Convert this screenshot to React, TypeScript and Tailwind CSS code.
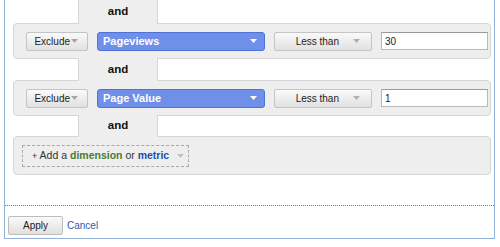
import React from "react";

const font = { fontFamily: '"Liberation Sans", Arial, sans-serif' };

function Caret({ color }: { color: string }) {
  return (
    <svg width="7" height="4" viewBox="0 0 7 4" className="shrink-0">
      <path d="M0 0 H7 L3.5 4 Z" fill={color} />
    </svg>
  );
}

function Connector({ h }: { h: string }) {
  return (
    <div className={`flex ml-[8px] ${h}`}>
      <div className="relative z-10 -my-px ml-[65px] flex w-[80px] items-center justify-center border-x border-[#d6d6d6] bg-[#eeeeee] text-[11.5px] font-bold text-[#111]">
        and
      </div>
    </div>
  );
}

function ConditionRow({ metric, value }: { metric: string; value: string }) {
  return (
    <div className="ml-[8px] flex h-[36px] w-[478px] items-center gap-[9px] rounded-[4px] border border-[#d6d6d6] bg-[#eeeeee] pl-[12px]">
      <div className="flex h-[19px] w-[62px] items-center justify-end gap-[1px] rounded-[2px] border border-[#c4c4c4] bg-gradient-to-b from-[#fafafa] to-[#e1e1e1] pr-[9px] text-[10px] text-[#222]">
        <span>Exclude</span>
        <Caret color="#a8a8a8" />
      </div>
      <div className="flex h-[19px] w-[168px] items-center justify-between rounded-[3px] border border-[#4f72d6] bg-[#6f8fe8] pl-[5px] pr-[7px] text-[11px] font-bold text-white">
        <span>{metric}</span>
        <Caret color="#ffffff" />
      </div>
      <div className="flex h-[19px] w-[98px] items-center justify-end gap-[14px] rounded-[2px] border border-[#c4c4c4] bg-gradient-to-b from-[#fafafa] to-[#e1e1e1] pr-[11px] text-[10px] text-[#222]">
        <span>Less than</span>
        <Caret color="#b0b0b0" />
      </div>
      <div className="flex h-[18px] w-[107px] items-center border border-[#b8b8b8] border-t-[#9a9a9a] bg-white pl-[3px] text-[10px] text-[#222]">
        {value}
      </div>
    </div>
  );
}

export default function App() {
  return (
    <div className="h-[247px] w-[500px] bg-white" style={font}>
      <div className="ml-[4px] flex w-[491px] flex-col border-x border-b border-[#93b0d6] pb-[3px]">
        <Connector h="h-[23px]" />
        <ConditionRow metric="Pageviews" value="30" />
        <Connector h="h-[21px]" />
        <ConditionRow metric="Page Value" value="1" />
        <Connector h="h-[20px]" />
        <div className="ml-[8px] flex h-[39px] w-[478px] items-center rounded-[4px] border border-[#d6d6d6] bg-[#eeeeee] pl-[8px]">
          <div className="flex h-[22px] w-[167px] items-center gap-[8px] border border-dashed border-[#a9a9a9] pl-[9px] text-[10.5px] text-[#333]">
            <span>
              <span className="text-[9px]">+</span> Add a{" "}
              <span className="font-bold text-[#4b7a35]">dimension</span> or{" "}
              <span className="font-bold text-[#1f4fa6]">metric</span>
            </span>
            <Caret color="#c0c0c0" />
          </div>
        </div>
        <div className="mt-[30px] border-t border-dotted border-[#777]" />
        <div className="mt-[10px] flex items-center gap-[4px] pl-[3px]">
          <div className="flex h-[19px] w-[55px] items-center justify-center rounded-[2px] border border-[#bdbdbd] bg-gradient-to-b from-[#fafafa] to-[#e0e0e0] text-[10px] text-[#222]">
            Apply
          </div>
          <span className="text-[10px] text-[#2a5aae]">Cancel</span>
        </div>
      </div>
    </div>
  );
}
